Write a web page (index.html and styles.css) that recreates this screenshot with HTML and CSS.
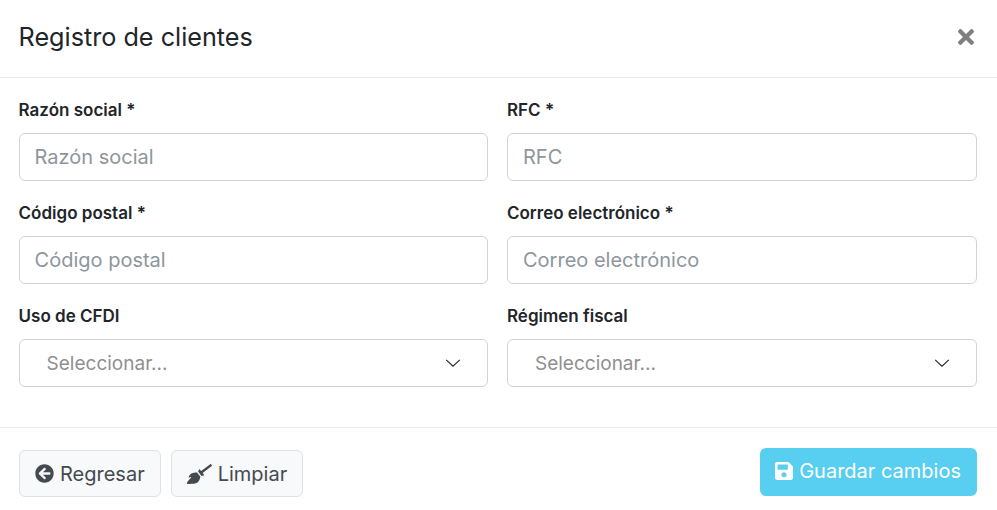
FILE: index.html
```html
<!DOCTYPE html>
<html lang="es">
<head>
  <meta charset="UTF-8">
  <meta name="viewport" content="width=device-width, initial-scale=1.0">
  <title>Registro de clientes</title>
  <link rel="stylesheet" href="styles.css">
</head>
<body>

<div class="modal">
  <div class="modal-header">
    <h1>Registro de clientes</h1>
    <button class="close" aria-label="Cerrar">
      <svg viewBox="0 80 352 352" width="16" height="16"><path fill="#7f7f7f" d="M242.72 256l100.070-100.070c12.280-12.280 12.280-32.190 0-44.480l-22.240-22.240c-12.280-12.280-32.190-12.280-44.480 0L176 189.280 75.930 89.210c-12.280-12.280-32.190-12.280-44.480 0L9.210 111.450c-12.280 12.280-12.280 32.190 0 44.480L109.280 256 9.210 356.070c-12.280 12.280-12.280 32.190 0 44.480l22.240 22.240c12.280 12.280 32.200 12.280 44.480 0L176 322.720l100.070 100.070c12.280 12.280 32.200 12.280 44.480 0l22.240-22.240c12.280-12.280 12.280-32.190 0-44.480L242.720 256z"/></svg>
    </button>
  </div>

  <form class="modal-body">
    <div class="field">
      <label>Razón social *</label>
      <input type="text" placeholder="Razón social">
    </div>
    <div class="field">
      <label>RFC *</label>
      <input type="text" placeholder="RFC">
    </div>
    <div class="field">
      <label>Código postal *</label>
      <input type="text" placeholder="Código postal">
    </div>
    <div class="field">
      <label>Correo electrónico *</label>
      <input type="text" placeholder="Correo electrónico">
    </div>
    <div class="field">
      <label>Uso de CFDI</label>
      <div class="select">
        <span>Seleccionar...</span>
        <svg viewBox="0 0 16 16" width="16" height="16"><path d="M1.2 4.800 L8 11.200 L14.800 4.800" stroke="#212529" stroke-width="1.1" fill="none"/></svg>
      </div>
    </div>
    <div class="field">
      <label>Régimen fiscal</label>
      <div class="select">
        <span>Seleccionar...</span>
        <svg viewBox="0 0 16 16" width="16" height="16"><path d="M1.2 4.800 L8 11.200 L14.800 4.800" stroke="#212529" stroke-width="1.1" fill="none"/></svg>
      </div>
    </div>
  </form>

  <div class="modal-footer">
    <div class="footer-left">
      <button class="btn btn-light">
        <svg viewBox="0 0 512 512" width="19" height="19"><path fill="#444a50" d="M256 504C119 504 8 393 8 256S119 8 256 8s248 111 248 248-111 248-248 248zm28.900-143.600L209.400 288H392c13.300 0 24-10.700 24-24v-16c0-13.300-10.700-24-24-24H209.400l75.500-72.400c9.700-9.300 9.900-24.800.4-34.300l-11-10.900c-9.400-9.400-24.600-9.400-33.900 0L107.700 239c-9.400 9.400-9.400 24.600 0 33.900l132.700 132.700c9.400 9.400 24.600 9.400 33.900 0l11-10.900c9.500-9.500 9.300-25-.4-34.300z"/></svg>
        Regresar
      </button>
      <button class="btn btn-light">
        <svg viewBox="0 0 640 512" width="25" height="20"><path fill="#444a50" d="M256.470 216.770l86.730 109.180s-16.600 102.360-76.570 150.120C206.660 523.850 0 510.190 0 510.190s3.800-23.140 11-55.430l94.620-112.170c3.970-4.700-.87-11.620-6.650-9.500l-60.400 22.090c14.440-41.660 32.720-80.040 54.600-97.470 59.970-47.760 163.300-40.940 163.300-40.940zM636.530 31.030l-19.860-25c-5.490-6.900-15.520-8.050-22.410-2.560l-232.480 177.800-34.140-42.970c-5.090-6.410-15.140-5.210-18.590 2.210l-25.330 54.550 86.730 109.180 58.800-12.450c8-1.690 11.420-11.200 6.340-17.600l-34.090-42.920 232.480-177.800c6.890-5.480 8.040-15.530 2.550-22.440z"/></svg>
        Limpiar
      </button>
    </div>
    <button class="btn btn-info">
      <svg viewBox="0 32 448 448" width="18" height="18"><path fill="#fff" d="M433.941 129.941l-83.882-83.882A48 48 0 0 0 316.118 32H48C21.490 32 0 53.490 0 80v352c0 26.510 21.490 48 48 48h352c26.510 0 48-21.490 48-48V163.882a48 48 0 0 0-14.059-33.941zM224 416c-35.346 0-64-28.654-64-64 0-35.346 28.654-64 64-64s64 28.654 64 64c0 35.346-28.654 64-64 64zm96-304.520V212c0 6.627-5.373 12-12 12H76c-6.627 0-12-5.373-12-12V108c0-6.627 5.373-12 12-12h228.520c3.183 0 6.235 1.264 8.485 3.515l3.480 3.480A11.996 11.996 0 0 1 320 111.480z"/></svg>
      Guardar cambios
    </button>
  </div>
</div>

</body>
</html>
```

FILE: styles.css
```css
* {
  box-sizing: border-box;
}
body {
  margin: 0;
  font-family: Inter, "Liberation Sans", sans-serif;
  font-size: 20px;
  color: #212529;
  background-color: white;
}
.modal {
  width: 997px;
  height: 510px;
  overflow: hidden;
}
.modal-header {
  display: flex;
  justify-content: space-between;
  align-items: center;
  height: 78px;
  padding: 0 23px 3px 18.6px;
  border-bottom: 1px solid #e9ecef;
}
h1 {
  margin: 0;
  font-size: 25.2px;
  font-weight: 400;
  line-height: 1.2;
}
.close {
  display: flex;
  padding: 0;
  border: none;
  background: none;
}
.modal-body {
  display: grid;
  grid-template-columns: 469.4px 470px;
  align-content: start;
  column-gap: 19px;
  row-gap: 22px;
  height: 349px;
  padding: 22px 20px 0 18.6px;
}
label {
  display: block;
  height: 33px;
  font-size: 17px;
  font-weight: 600;
  line-height: 20px;
}
input, .select {
  display: block;
  width: 100%;
  height: 48px;
  border: 1px solid #ced4da;
  border-radius: 6px;
  font-family: inherit;
  font-size: 20px;
  background-color: white;
}
input {
  padding: 0 15px;
}
input::placeholder {
  color: #8e969d;
}
.select {
  display: flex;
  justify-content: space-between;
  align-items: center;
  padding: 0 26px 0 27px;
  font-size: 19px;
  color: #8f8f8f;
}
.modal-footer {
  display: flex;
  justify-content: space-between;
  align-items: flex-start;
  padding: 20px 20px 0 19px;
  border-top: 1px solid #e9ecef;
}
.footer-left {
  display: flex;
  gap: 10px;
  padding-top: 2px;
}
.btn {
  display: flex;
  align-items: center;
  gap: 6px;
  height: 47px;
  padding: 0 15px;
  border: 1px solid #dee2e6;
  border-radius: 6px;
  font-family: inherit;
  font-size: 20px;
  color: #444a50;
}
.btn-light {
  background-color: #f8f9fa;
}
.btn-info {
  height: 48px;
  padding: 0 16px 2px 15px;
  border: none;
  color: white;
  background-color: #58cef0;
}
```
